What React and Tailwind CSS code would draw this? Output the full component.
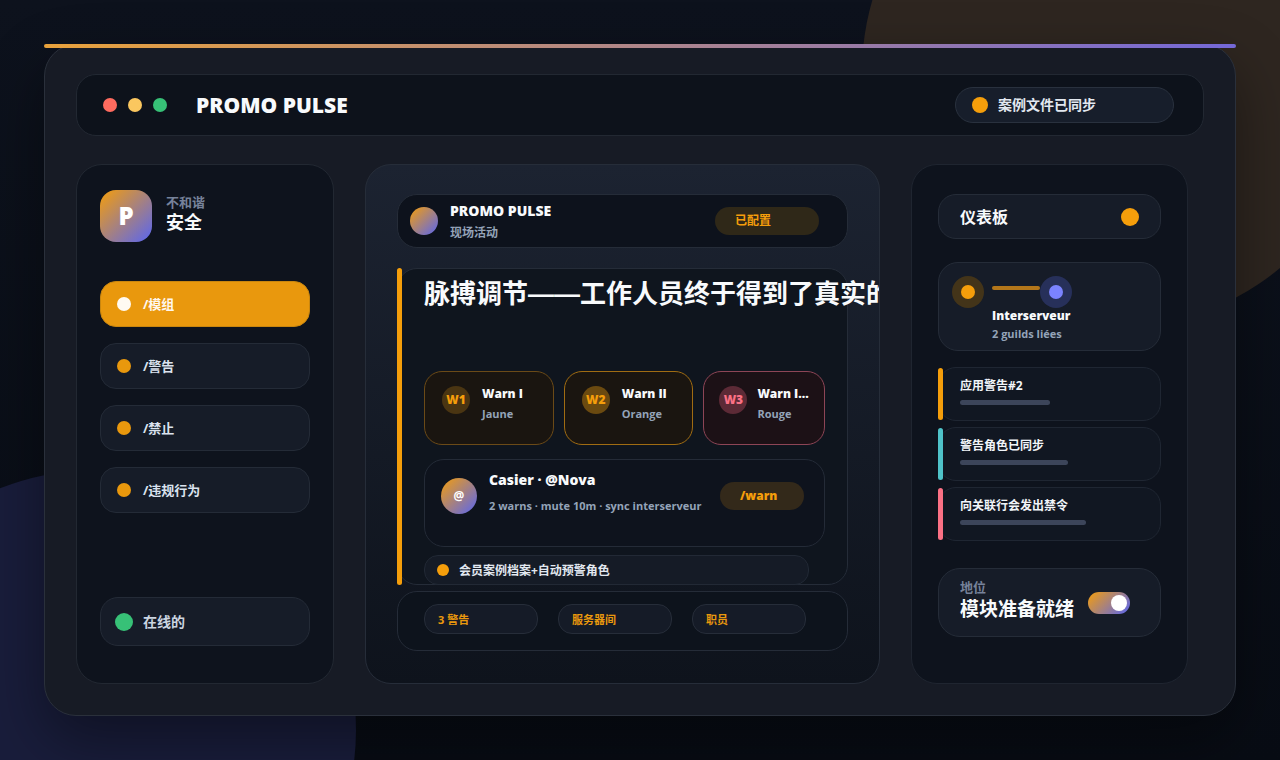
import clsx from "clsx";

const commands = [
  { name: "/模组", active: true },
  { name: "/警告" },
  { name: "/禁止" },
  { name: "/违规行为" },
];

const warns = [
  {
    badge: "W1",
    title: "Warn I",
    color: "Jaune",
    card: "border-[#6b4a17] bg-[#1a1510] pl-[17px] gap-3",
    dot: "bg-[#4a3512] text-[#f59e0b]",
  },
  {
    badge: "W2",
    title: "Warn II",
    color: "Orange",
    card: "border-[#a06c12] bg-[#1a1510] pl-[17px] gap-3",
    dot: "bg-[#6b4a10] text-[#f59e0b]",
  },
  {
    badge: "W3",
    title: "Warn I...",
    color: "Rouge",
    card: "border-[#8d4556] bg-[#1c1116] pl-[15px] gap-2.5",
    dot: "bg-[#5c2a36] text-[#fb7185]",
  },
];

const stats = ["3 警告", "服务器间", "职员"];

const logs = [
  { text: "应用警告#2", bar: "bg-[#f59e0b]", width: "w-[90px]" },
  { text: "警告角色已同步", bar: "bg-[#4fc3c9]", width: "w-[108px]" },
  { text: "向关联行会发出禁令", bar: "bg-[#fb7185]", width: "w-[126px]" },
];

function TopBar() {
  return (
    <header className="flex items-center justify-between rounded-[20px] border border-[#222832] bg-[#0d121b] py-3 pl-[26px] pr-[29px]">
      <div className="flex items-center gap-[11px]">
        <span className="size-3.5 rounded-full bg-[#ff6b5f]" />
        <span className="size-3.5 rounded-full bg-[#fac75f]" />
        <span className="size-3.5 rounded-full bg-[#37c177]" />
        <h1 className="ml-[18px] text-[21px] leading-7 font-extrabold text-[#f8fafc]">
          PROMO PULSE
        </h1>
      </div>
      <div className="flex h-9 w-[219px] items-center gap-2.5 rounded-full border border-[#29313e] bg-[#171e2b] px-4">
        <span className="size-4 rounded-full bg-[#f59e0b]" />
        <span className="text-sm font-bold text-[#e2e8f0]">案例文件已同步</span>
      </div>
    </header>
  );
}

function Sidebar() {
  return (
    <aside className="flex flex-col rounded-[26px] border border-[#222832] bg-[#0e131d] px-[23px] pt-[25px] pb-[37px]">
      <div className="flex items-center gap-3.5">
        <div className="flex size-[52px] items-center justify-center rounded-2xl bg-[linear-gradient(135deg,#f59e0b,#5865f2)] text-2xl font-extrabold text-white">
          P
        </div>
        <div className="pb-1">
          <p className="text-[13px] leading-4 font-bold text-[#76829a]">不和谐</p>
          <p className="text-lg leading-6 font-bold text-[#f8fafc]">安全</p>
        </div>
      </div>

      <nav className="mt-[39px] flex flex-col gap-4">
        {commands.map((command) => (
          <a
            key={command.name}
            href="#"
            className={clsx(
              "flex h-[46px] items-center gap-3 rounded-2xl border px-4 text-[13px] font-bold",
              command.active
                ? "border-[#c9860f] bg-[#e9980d] text-[#fff7ed]"
                : "border-[#242b37] bg-[#161c28] text-[#dbe3ef]"
            )}
          >
            <span
              className={clsx(
                "size-3.5 rounded-full",
                command.active ? "bg-[#fffaf2]" : "bg-[#e9980d]"
              )}
            />
            <span className="pt-0.5">{command.name}</span>
          </a>
        ))}
      </nav>

      <div className="mt-auto flex h-[49px] items-center gap-2.5 rounded-[18px] border border-[#242b37] bg-[#161c28] px-3.5">
        <span className="size-[18px] rounded-full bg-[#37c177]" />
        <span className="text-sm font-bold text-[#cbd5e1]">在线的</span>
      </div>
    </aside>
  );
}

function WarnCard({ warn }) {
  return (
    <div
      className={clsx(
        "flex h-[74px] min-w-0 items-start rounded-[18px] border pt-3.5",
        warn.card
      )}
    >
      <span
        className={clsx(
          "flex size-7 shrink-0 items-center justify-center rounded-full text-xs font-extrabold",
          warn.dot
        )}
      >
        {warn.badge}
      </span>
      <div className="min-w-0 whitespace-nowrap">
        <p className="text-xs leading-4 font-extrabold text-[#f8fafc]">{warn.title}</p>
        <p className="mt-1 text-[11px] leading-4 font-bold text-[#94a3b8]">
          {warn.color}
        </p>
      </div>
    </div>
  );
}

function Preview() {
  return (
    <main className="min-w-0 overflow-hidden rounded-[26px] border border-[#262d39] bg-linear-to-b from-[#1c2331] to-[#0e131c] px-[31px] pt-[29px] pb-8">
      <div className="flex h-[54px] items-center rounded-[20px] border border-[#252c38] bg-[#0d121c] pr-7 pl-3">
        <span className="size-7 rounded-full bg-[linear-gradient(135deg,#f59e0b,#5865f2)]" />
        <div className="ml-3 pt-0.5">
          <p className="text-sm leading-5 font-extrabold text-[#f8fafc]">PROMO PULSE</p>
          <p className="mt-0.5 text-xs leading-5 font-bold text-[#94a3b8]">现场活动</p>
        </div>
        <span className="ml-auto w-[104px] rounded-full bg-[#2f2818] px-5 py-1.5 text-xs leading-4 font-bold text-[#f59e0b]">
          已配置
        </span>
      </div>

      <section className="relative mt-5 rounded-[20px] border border-[#252c38] bg-[#0f151e] pt-[11px] pr-[22px] pl-[26px]">
        <span className="absolute -inset-y-px -left-px w-[5px] rounded-full bg-[#f59e0b]" />
        <h2 className="font-['Liberation_Sans','Noto_Sans_CJK_SC',sans-serif] text-[26px] leading-7 font-bold whitespace-nowrap text-[#f8fafc]">
          脉搏调节——工作人员终于得到了真实的
        </h2>

        <div className="mt-[63px] grid grid-cols-[16fr_16fr_15fr] gap-2.5">
          {warns.map((warn) => (
            <WarnCard key={warn.badge} warn={warn} />
          ))}
        </div>

        <div className="mt-3.5 flex h-[88px] items-start rounded-[20px] border border-[#242b37] bg-[#0e131d] pt-[18px] pr-5 pl-4">
          <span className="flex size-9 shrink-0 items-center justify-center rounded-full bg-[linear-gradient(135deg,#f59e0b,#5865f2)] text-xs font-bold text-white">
            @
          </span>
          <div className="-mt-2 ml-3 min-w-0 whitespace-nowrap">
            <p className="text-sm leading-5 font-extrabold text-[#f8fafc]">Casier · @Nova</p>
            <p className="mt-1.5 text-[11px] leading-5 font-bold text-[#94a3b8]">
              2 warns · mute 10m · sync interserveur
            </p>
          </div>
          <button className="mt-1 ml-auto w-[84px] shrink-0 rounded-full bg-[#33291a] px-5 py-1.5 text-left text-xs leading-4 font-extrabold text-[#f59e0b]">
            /warn
          </button>
        </div>

        <div className="mt-2 mr-4 -mb-px flex h-[30px] items-center gap-2.5 rounded-[14px] border border-[#222935] bg-[#151b26] px-3">
          <span className="size-3 rounded-full bg-[#f59e0b]" />
          <span className="pt-0.5 text-xs font-bold text-[#e2e8f0]">
            会员案例档案+自动预警角色
          </span>
        </div>
      </section>

      <div className="mt-1.5 flex h-[60px] items-start gap-5 rounded-[20px] border border-[#252c38] bg-[#0d131c] px-[26px] pt-3">
        {stats.map((stat) => (
          <span
            key={stat}
            className="w-[114px] rounded-[14px] border border-[#262d39] bg-[#151b27] px-[13px] pt-[7px] pb-[5px] text-[11px] leading-4 font-bold text-[#e9980d]"
          >
            {stat}
          </span>
        ))}
      </div>
    </main>
  );
}

function Dashboard() {
  return (
    <aside className="rounded-[26px] border border-[#1f2530] bg-[#0e131d] px-[26px] pt-[29px] pb-[46px]">
      <div className="flex h-[45px] items-center justify-between rounded-[18px] border border-[#252c38] bg-[#161c28] px-[21px]">
        <h2 className="text-base font-bold text-[#f8fafc]">仪表板</h2>
        <span className="size-[18px] rounded-full bg-[#f59e0b]" />
      </div>

      <div className="mt-[23px] h-[89px] rounded-[20px] border border-[#252c38] bg-[#161c28] px-[13px] pt-[13px]">
        <div className="flex items-start">
          <span className="flex size-8 items-center justify-center rounded-full bg-[#433419]">
            <span className="size-3.5 rounded-full bg-[#f59e0b]" />
          </span>
          <span className="mt-2.5 ml-2 h-1 w-12 rounded-full bg-[#b3761a]" />
          <span className="flex size-8 items-center justify-center rounded-full bg-[#27305a]">
            <span className="size-3.5 rounded-full bg-[#7b83ff]" />
          </span>
        </div>
        <div className="pl-10">
          <p className="text-xs leading-4 font-extrabold text-[#f8fafc]">Interserveur</p>
          <p className="mt-0.5 text-[11px] leading-4 font-bold text-[#94a3b8]">
            2 guilds liées
          </p>
        </div>
      </div>

      <ul className="mt-4 flex flex-col gap-1.5">
        {logs.map((log) => (
          <li
            key={log.text}
            className="relative h-[54px] rounded-[18px] border border-[#1f2632] bg-[#111722] px-[21px] pt-2.5"
          >
            <span
              className={clsx("absolute inset-y-0 -left-px w-[5px] rounded-full", log.bar)}
            />
            <p className="text-xs leading-4 font-bold text-[#f1f5f9]">{log.text}</p>
            <span className={clsx("mt-1.5 block h-[5px] rounded-full bg-[#3c455a]", log.width)} />
          </li>
        ))}
      </ul>

      <label className="mt-[27px] flex h-[69px] items-center rounded-[22px] border border-[#252c38] bg-[#161c28] px-[21px]">
        <span className="pb-1">
          <span className="block text-[13px] leading-4 font-bold text-[#76829a]">地位</span>
          <span className="block text-[19px] leading-7 font-bold whitespace-nowrap text-[#f8fafc]">
            模块准备就绪
          </span>
        </span>
        <input
          type="checkbox"
          role="switch"
          defaultChecked
          className="ml-3.5 flex h-[22px] w-[42px] shrink-0 appearance-none items-center justify-end rounded-full bg-[linear-gradient(135deg,#f59e0b,#5865f2)] pr-[3px] before:size-4 before:rounded-full before:bg-white"
        />
      </label>
    </aside>
  );
}

export default function App() {
  return (
    <div className="relative min-h-screen overflow-hidden bg-linear-to-b from-[#0d121d] to-[#080c14] p-11 font-['Open_Sans','Noto_Sans_CJK_SC',sans-serif]">
      <span className="absolute -top-[183px] -right-[92px] size-[510px] rounded-full bg-[#2e2620]" />
      <span className="absolute -bottom-[230px] -left-[164px] size-[520px] rounded-full bg-[#191d3b]" />

      <div className="relative rounded-[32px] border border-[#2a303b] bg-[#171b25] px-[31px] pt-[29px] pb-[31px] shadow-[0_24px_60px_rgba(0,0,0,0.4)]">
        <span className="absolute -inset-x-px -top-px h-1 rounded-full bg-[linear-gradient(135deg,#e9a23b,#7468d8)]" />
        <TopBar />
        <div className="mt-7 grid min-h-[520px] grid-cols-[258fr_515fr_277fr] gap-[31px] pr-4">
          <Sidebar />
          <Preview />
          <Dashboard />
        </div>
      </div>
    </div>
  );
}
